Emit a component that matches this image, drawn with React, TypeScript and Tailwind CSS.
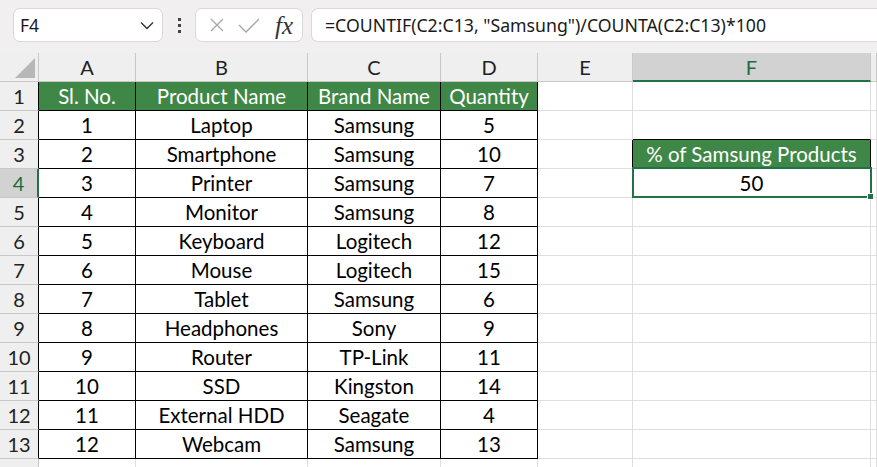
import React from "react";

const rows: [string, string, string, string][] = [
  ["1", "Laptop", "Samsung", "5"],
  ["2", "Smartphone", "Samsung", "10"],
  ["3", "Printer", "Samsung", "7"],
  ["4", "Monitor", "Samsung", "8"],
  ["5", "Keyboard", "Logitech", "12"],
  ["6", "Mouse", "Logitech", "15"],
  ["7", "Tablet", "Samsung", "6"],
  ["8", "Headphones", "Sony", "9"],
  ["9", "Router", "TP-Link", "11"],
  ["10", "SSD", "Kingston", "14"],
  ["11", "External HDD", "Seagate", "4"],
  ["12", "Webcam", "Samsung", "13"],
];

const cellFont = { fontFamily: "Lato, 'Noto Sans', sans-serif" };

function TopBar() {
  return (
    <div className="flex h-[53px] items-start bg-[#f1efef] pt-[8px]">
      <div className="ml-[13px] flex h-[34px] w-[150px] items-center justify-between rounded-[7px] border border-[#d9d9d9] bg-white pl-[6px] pr-[8px]">
        <span className="text-[17.5px] text-[#1a1a1a]" style={{ fontFamily: "'Noto Sans', sans-serif" }}>F4</span>
        <svg width="14" height="9" viewBox="0 0 14 9" fill="none">
          <path d="M1 1.5 L7 7.5 L13 1.5" stroke="#333" strokeWidth="1.4" />
        </svg>
      </div>
      <div className="flex h-[34px] w-[32px] flex-col items-center justify-center gap-[3px]">
        <div className="h-[3px] w-[3px] bg-[#444]" />
        <div className="h-[3px] w-[3px] bg-[#444]" />
        <div className="h-[3px] w-[3px] bg-[#444]" />
      </div>
      <div className="flex h-[34px] w-[108px] items-center rounded-[7px] border border-[#d9d9d9] bg-white">
        <svg className="ml-[14px]" width="14" height="14" viewBox="0 0 14 14" fill="none">
          <path d="M1 1 L13 13 M13 1 L1 13" stroke="#a6a6a6" strokeWidth="1.3" />
        </svg>
        <svg className="ml-[14px]" width="22" height="15" viewBox="0 0 22 15" fill="none">
          <path d="M1 7 L8 14 L21 1" stroke="#a6a6a6" strokeWidth="1.3" />
        </svg>
        <span
          className="ml-[15px] text-[25px] italic leading-none text-[#333]"
          style={{ fontFamily: "'Liberation Serif', serif" }}
        >
          fx
        </span>
      </div>
      <div className="ml-[8px] flex h-[34px] flex-1 items-center rounded-l-[7px] border border-r-0 border-[#d9d9d9] bg-white pl-[13px]">
        <span className="text-[17.7px] text-[#1a1a1a]" style={{ fontFamily: "'Noto Sans', sans-serif" }}>
          =COUNTIF(C2:C13, "Samsung")/COUNTA(C2:C13)*100
        </span>
      </div>
    </div>
  );
}

function Sheet() {
  const letters = ["A", "B", "C", "D", "E", "F", ""];
  const cells: React.ReactNode[] = [];

  cells.push(
    <div key="corner" className="relative h-[29px] border-r border-b border-[#c8c8c8] bg-[#efefef]">
      <svg className="absolute left-[15px] top-[5px]" width="20" height="20" viewBox="0 0 20 20">
        <path d="M20 0 L20 20 L0 20 Z" fill="#b7b7b7" />
      </svg>
    </div>
  );
  letters.forEach((l, i) => {
    const sel = l === "F";
    cells.push(
      <div
        key={"h" + i}
        className={
          "flex h-[29px] items-center justify-center text-[20px] " +
          (sel
            ? "border-b-2 border-r border-b-[#217346] border-r-[#c8c8c8] bg-[#d2d2d2] text-[#1e6b41]"
            : "border-r border-b border-[#c8c8c8] bg-[#efefef] text-[#222]")
        }
        style={cellFont}
      >
        {l}
      </div>
    );
  });

  for (let r = 1; r <= 14; r++) {
    const inTable = r <= 13;
    const selRow = r === 4;
    cells.push(
      <div
        key={"rh" + r}
        className={
          "flex h-[29px] items-center justify-center text-[20px] " +
          (selRow
            ? "border-r-2 border-b border-r-[#217346] border-b-[#c8c8c8] bg-[#d2d2d2] text-[#1e6b41]"
            : inTable
            ? "border-r border-b border-r-black border-b-[#c8c8c8] bg-[#efefef] text-[#222]"
            : "border-r border-b border-[#c8c8c8] bg-[#efefef] text-[#222]")
        }
        style={cellFont}
      >
        {inTable ? r : null}
      </div>
    );
    for (let c = 0; c < 7; c++) {
      const key = "c" + r + "-" + c;
      if (c < 4 && inTable) {
        const header = r === 1;
        const text = header
          ? ["Sl. No.", "Product Name", "Brand Name", "Quantity"][c]
          : rows[r - 2][c];
        cells.push(
          <div
            key={key}
            className={
              "flex h-[29px] items-center justify-center whitespace-nowrap border-r border-b border-black text-[20.5px] " +
              (header ? "bg-[#3f8746] text-white" : "bg-white text-black")
            }
            style={cellFont}
          >
            {text}
          </div>
        );
        continue;
      }
      let cls = "border-r border-b border-[#dedede] bg-white";
      let content: React.ReactNode = null;
      if (c === 5 && r === 2) cls = "border-r border-b border-r-[#dedede] border-b-black bg-white";
      if (c === 4 && r === 3) cls = "border-r border-b border-r-black border-b-[#dedede] bg-white";
      if (c === 5 && r === 3) {
        cls = "border-r border-b border-black bg-[#3f8746] text-white";
        content = "% of Samsung Products";
      }
      if (c === 5 && r === 4) {
        cls = "relative border-r border-b border-[#dedede] bg-white text-black";
        content = (
          <>
            50
            <div className="absolute -left-[1px] -top-[2px] h-[31px] w-[240px] border-2 border-[#217346]">
              <div className="absolute -bottom-[4px] -right-[4px] h-[7px] w-[7px] border border-white bg-[#217346]" />
            </div>
          </>
        );
      }
      cells.push(
        <div
          key={key}
          className={"flex h-[29px] items-center justify-center whitespace-nowrap text-[20.5px] " + cls}
          style={cellFont}
        >
          {content}
        </div>
      );
    }
  }

  return (
    <div className="grid grid-cols-[39px_97px_172px_133px_97px_95px_238px_1fr]">{cells}</div>
  );
}

export default function App() {
  return (
    <div className="h-[467px] w-[877px] overflow-hidden bg-white">
      <TopBar />
      <Sheet />
    </div>
  );
}
